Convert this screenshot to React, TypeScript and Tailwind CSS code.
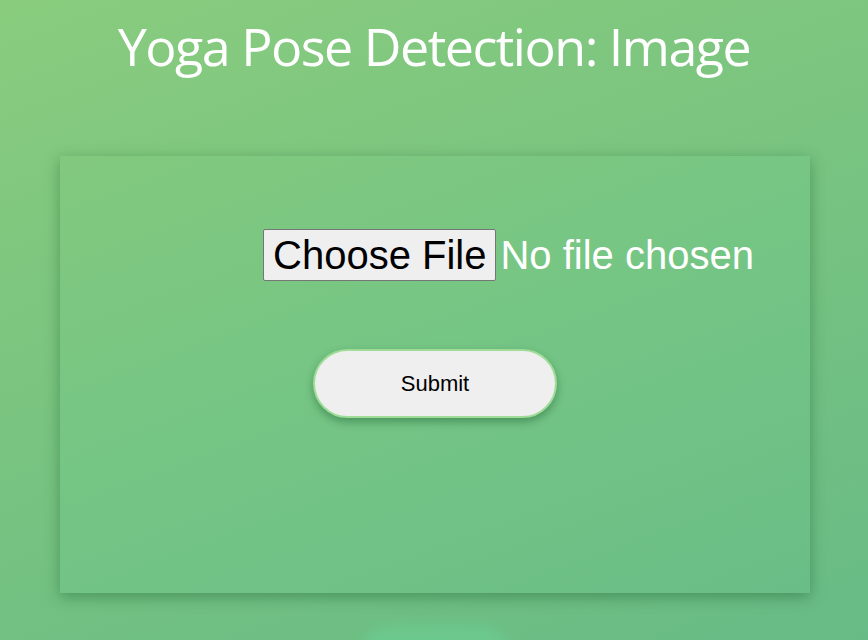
import React from "react";

export default function App() {
  return (
    <div className="relative w-full h-[640px] overflow-hidden bg-[linear-gradient(160deg,#89cc7e_0%,#79c480_45%,#68bb86_100%)]">
      <div className="absolute left-[360px] top-[626px] w-[150px] h-[60px] rounded-full bg-[#6ccc90] blur-[6px] opacity-80" />
      <h1
        className="text-center text-white text-[52px] leading-none pt-[20px] tracking-[-1.5px]"
        style={{ fontFamily: '"Open Sans", sans-serif' }}
      >
        Yoga Pose Detection: Image
      </h1>
      <div className="relative mt-[84px] ml-[60px] w-[750px] h-[437px] bg-[linear-gradient(160deg,#82c97e_0%,#74c585_50%,#6abd86_100%)] shadow-[0_4px_14px_rgba(0,70,20,0.35)]">
        <div className="pl-[203px] pt-[73px] h-[125px]">
          <input
            type="file"
            className="text-[40px] text-white leading-[52px] file:bg-[#efefef] file:text-black file:border file:border-solid file:border-[#767676] file:rounded-[2px] file:px-[9px] file:py-[3px] file:mr-[4px] file:leading-[44px]"
            style={{ fontFamily: '"Liberation Sans", Arial, sans-serif' }}
          />
        </div>
        <div className="pl-[253px] pt-[68px]">
          <button
            className="w-[244px] h-[69px] rounded-full bg-[#efefef] border-2 border-[#9edc98] text-[22px] text-black shadow-[0_4px_8px_rgba(0,60,20,0.35)]"
            style={{ fontFamily: '"Liberation Sans", Arial, sans-serif' }}
          >
            Submit
          </button>
        </div>
      </div>
    </div>
  );
}
